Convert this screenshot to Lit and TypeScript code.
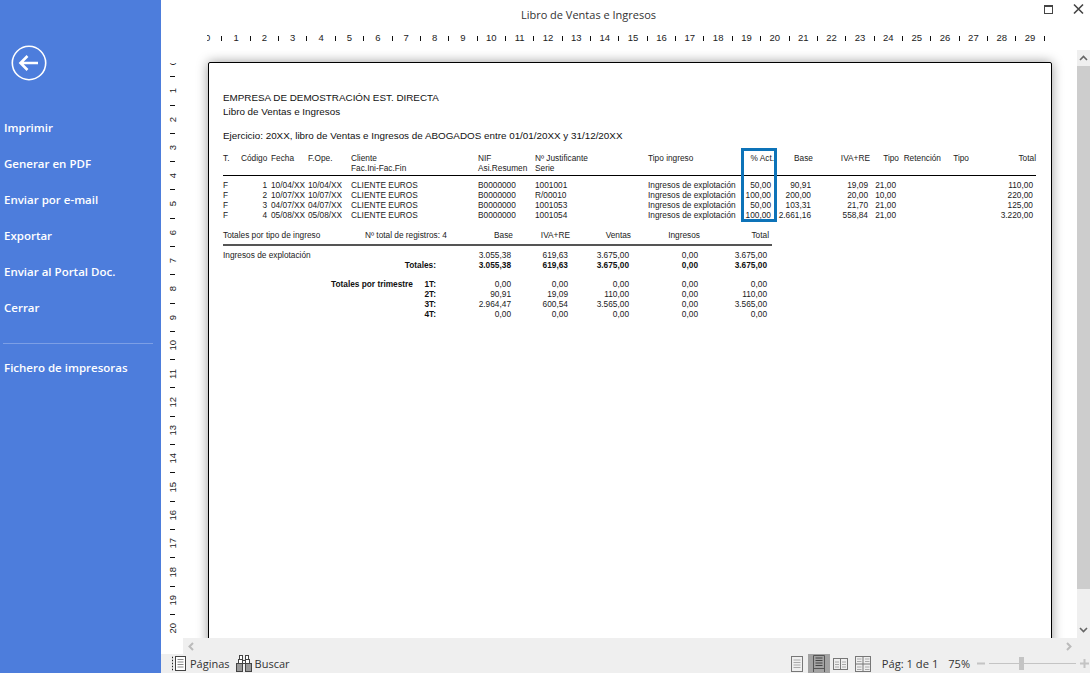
import { LitElement, html, css } from "lit";
import { customElement } from "lit/decorators.js";

const MENU = ["Imprimir", "Generar en PDF", "Enviar por e-mail", "Exportar", "Enviar al Portal Doc.", "Cerrar"];
const H_NUMS = Array.from({ length: 30 }, (_, i) => i);
const V_NUMS = Array.from({ length: 21 }, (_, i) => i);

const ROWS = [
  ["F", "1", "10/04/XX", "10/04/XX", "CLIENTE EUROS", "B0000000", "1001001", "Ingresos de explotación", "50,00", "90,91", "19,09", "21,00", "", "", "110,00"],
  ["F", "2", "10/07/XX", "10/07/XX", "CLIENTE EUROS", "B0000000", "R/00010", "Ingresos de explotación", "100,00", "200,00", "20,00", "10,00", "", "", "220,00"],
  ["F", "3", "04/07/XX", "04/07/XX", "CLIENTE EUROS", "B0000000", "1001053", "Ingresos de explotación", "50,00", "103,31", "21,70", "21,00", "", "", "125,00"],
  ["F", "4", "05/08/XX", "05/08/XX", "CLIENTE EUROS", "B0000000", "1001054", "Ingresos de explotación", "100,00", "2.661,16", "558,84", "21,00", "", "", "3.220,00"],
];

const CELL_CLASS: Record<number, string> = { 1: "r", 8: "r v", 9: "r v2", 10: "r v2", 11: "r v", 14: "r v" };

const TRIM = [
  ["1T:", "0,00", "0,00", "0,00", "0,00", "0,00"],
  ["2T:", "90,91", "19,09", "110,00", "0,00", "110,00"],
  ["3T:", "2.964,47", "600,54", "3.565,00", "0,00", "3.565,00"],
  ["4T:", "0,00", "0,00", "0,00", "0,00", "0,00"],
];

@customElement("app-root")
export class AppRoot extends LitElement {
  static styles = css`
    :host { display: block; width: 1090px; height: 673px; overflow: hidden; background: #fff; font-family: "Open Sans", "Noto Sans", sans-serif; }
    .app { display: flex; width: 1090px; height: 673px; }
    .side { width: 161px; flex: none; background: #4d7ddc; color: #fff; display: flex; flex-direction: column; box-sizing: border-box; padding-top: 45px; }
    .back { width: 36px; height: 36px; margin-left: 11px; margin-bottom: 29px; display: block; }
    .item { height: 36px; line-height: 36px; padding-left: 4px; font-size: 11.5px; font-weight: 600; white-space: nowrap; }
    .sep { height: 1px; background: #7c9fe6; margin: 17px 8px 6px 3px; }
    .main { flex: 1; min-width: 0; display: flex; flex-direction: column; }
    .title { height: 28px; display: flex; align-items: center; justify-content: center; position: relative; font-size: 11px; color: #333; padding-right: 74px; }
    .win { position: absolute; top: 3px; right: 2px; display: flex; align-items: center; }
    .win svg { display: block; }
    .hruler { height: 22px; flex: none; margin-left: 46px; margin-right: 40px; overflow: hidden; display: flex; align-items: flex-start; font: 9.5px/20px "Liberation Sans", sans-serif; color: #222; }
    .hcell { width: 28.36px; flex: none; position: relative; text-align: center; height: 20px; }
    .hcell:first-child { margin-left: -13.5px; }
    .hcell::after { content: ""; position: absolute; right: -0.5px; top: 8px; width: 1px; height: 5px; background: #111; }
    .mid { flex: 1; min-height: 0; display: flex; }
    .vruler { width: 24px; flex: none; margin-top: 12.5px; overflow: hidden; font: 9.5px/10px "Liberation Sans", sans-serif; color: #222; position: relative; }
    .vcell { height: 28.3px; position: relative; display: flex; align-items: center; justify-content: center; }
    .vcell:first-child { margin-top: -14.1px; }
    .vcell span { writing-mode: vertical-rl; transform: rotate(180deg); display: block; }
    .vcell::after { content: ""; position: absolute; left: 9px; bottom: -0.5px; width: 5px; height: 1px; background: #111; }
    .canvas { flex: 1; min-width: 0; overflow: hidden; padding: 12px 0 0 23px; }
    .page { width: 844px; height: 620px; box-sizing: border-box; border: 1px solid #000; border-radius: 2px 2px 0 0; background: #fff; box-shadow: 0 0 12px rgba(0,0,0,.4); padding: 28px 0 0 14px; font: 8.3px/10px "Liberation Sans", sans-serif; color: #222; }
    .h1 { font-size: 9.85px; line-height: 14px; color: #111; white-space: nowrap; }
    .h1.gap { margin-top: 10px; margin-bottom: 10px; }
    .grid { display: grid; grid-template-columns: 18px 26px 4px 37px 43px 127px 57px 113px 94px 32px 39px 57px 29px 42px 28px 67px; width: 813px; white-space: nowrap; position: relative; }
    .r { text-align: right; }
    .hd { height: 22px; border-bottom: 1px solid #000; margin-bottom: 4px; }
    .v { padding-right: 3px; }
    .v2 { padding-right: 2px; }
    .box { position: absolute; left: 518px; top: -5px; width: 36px; height: 74px; box-sizing: border-box; border: 3px solid #0d73b8; pointer-events: none; }
    .wrap { position: relative; width: 813px; }
    .t2 { display: grid; grid-template-columns: 213px 77px 57px 61px 69px 69px; width: 549px; white-space: nowrap; }
    .lab { display: flex; }
    .t2h { margin-top: 10px; height: 14px; border-bottom: 2px solid #555; margin-bottom: 4px; }
    .b { font-weight: 700; color: #111; }
    .n { padding-right: 2px; text-align: right; }
    .nh { text-align: right; }
    .first { width: 142px; flex: none; }
    .tt { flex: 1; text-align: right; }
    .tri { margin-left: 108px; font-weight: 700; color: #111; }
    .gapTop { margin-top: 9px; }
    .vs { width: 13px; flex: none; background: #efefef; display: flex; flex-direction: column; align-items: stretch; }
    .arrow { height: 16px; display: flex; align-items: center; justify-content: center; }
    .thumb { height: 523px; background: #cdcdcd; }
    .rest { flex: 1; }
    .hsrow { height: 16px; flex: none; display: flex; }
    .hsgap { width: 22px; flex: none; background: #fff; }
    .hs { flex: 1; background: #efefef; display: flex; justify-content: space-between; align-items: center; padding: 0 18px 0 5px; }
    .status { height: 19px; flex: none; background: #efefef; display: flex; align-items: center; font-size: 11px; color: #333; padding-left: 10px; box-sizing: border-box; }
    .status svg { display: block; flex: none; }
    .lbl { white-space: nowrap; }
    .ml4 { margin-left: 4px; }
    .ml3 { margin-left: 3px; }
    .ml6 { margin-left: 6px; }
    .pag { margin-left: 11px; font-size: 11.2px; }
    .pct { margin-left: 10px; }
    .grow { flex: 1; }
    .views { display: flex; align-items: center; }
    .vbtn { height: 19px; display: flex; align-items: center; justify-content: center; }
    .vbtn.on { background: #a3a3a3; width: 22px; margin: 0 3px 0 5px; }
    .vbtn.last { margin-left: 7px; }
    .zoom { display: flex; align-items: center; margin-left: 7px; margin-right: 1px; }
    .track { width: 87px; height: 1px; background: #c4c4c4; position: relative; margin: 0 4px; }
    .knob { position: absolute; left: 30px; top: -6px; width: 5px; height: 13px; background: #c4c4c4; }
  `;

  private hruler() {
    return html`<div class="hruler">${H_NUMS.map((n) => html`<div class="hcell">${n}</div>`)}</div>`;
  }

  private vruler() {
    return html`<div class="vruler">${V_NUMS.map((n) => html`<div class="vcell"><span>${n}</span></div>`)}</div>`;
  }

  private report() {
    return html`
      <div class="page">
        <div class="h1">EMPRESA DE DEMOSTRACIÓN EST. DIRECTA</div>
        <div class="h1">Libro de Ventas e Ingresos</div>
        <div class="h1 gap">Ejercicio: 20XX, libro de Ventas e Ingresos de ABOGADOS entre 01/01/20XX y 31/12/20XX</div>
        <div class="wrap">
          <div class="grid hd">
            <div>T.</div><div class="r">Código</div><div></div><div>Fecha</div><div>F.Ope.</div>
            <div>Cliente<br />Fac.Ini-Fac.Fin</div><div>NIF<br />Asi.Resumen</div><div>Nº Justificante<br />Serie</div>
            <div>Tipo ingreso</div><div class="r">% Act.</div><div class="r">Base</div><div class="r">IVA+RE</div>
            <div class="r">Tipo</div><div class="r">Retención</div><div class="r">Tipo</div><div class="r">Total</div>
          </div>
          ${ROWS.map((row) => html`<div class="grid">
            ${row.map((c, i) => html`${i === 2 ? html`<div></div>` : ""}<div class="${CELL_CLASS[i] ?? ""}">${c}</div>`)}
          </div>`)}
          <div class="box"></div>
        </div>
        <div class="t2 t2h">
          <div class="lab"><span class="first">Totales por tipo de ingreso</span><span>Nº total de registros: 4</span></div>
          <div class="nh">Base</div><div class="nh">IVA+RE</div><div class="nh">Ventas</div><div class="nh">Ingresos</div><div class="nh">Total</div>
        </div>
        <div class="t2">
          <div>Ingresos de explotación</div>
          <div class="n">3.055,38</div><div class="n">619,63</div><div class="n">3.675,00</div><div class="n">0,00</div><div class="n">3.675,00</div>
          <div class="b r">Totales:</div>
          <div class="n b">3.055,38</div><div class="n b">619,63</div><div class="n b">3.675,00</div><div class="n b">0,00</div><div class="n b">3.675,00</div>
        </div>
        <div class="t2 gapTop">
          ${TRIM.map((row, i) => html`
            <div class="lab">
              ${i === 0 ? html`<span class="tri">Totales por trimestre</span>` : ""}
              <span class="tt b">${row[0]}</span>
            </div>
            ${row.slice(1).map((c) => html`<div class="n">${c}</div>`)}
          `)}
        </div>
      </div>
    `;
  }

  render() {
    return html`
      <div class="app">
        <aside class="side">
          <svg class="back" viewBox="0 0 36 36" fill="none" stroke="#fff">
            <circle cx="18" cy="18" r="16.7" stroke-width="1.6" />
            <path d="M9.500 18h17.500M16.500 11l-7 7 7 7" stroke-width="2.600" />
          </svg>
          ${MENU.map((m) => html`<div class="item">${m}</div>`)}
          <div class="sep"></div>
          <div class="item">Fichero de impresoras</div>
        </aside>
        <main class="main">
          <div class="title">
            Libro de Ventas e Ingresos
            <div class="win">
              <svg width="46" height="12" viewBox="0 0 46 12" fill="none" stroke="#444">
                <rect x="2.500" y="2.500" width="8" height="8" />
                <path d="M2 3h9" stroke-width="2" />
                <path d="M32 1.500l9 9M41 1.500l-9 9" stroke-width="1.600" />
              </svg>
            </div>
          </div>
          ${this.hruler()}
          <div class="mid">
            ${this.vruler()}
            <div class="canvas">${this.report()}</div>
            <div class="vs">
              <div class="arrow"><svg width="9" height="6" viewBox="0 0 9 6" fill="none" stroke="#666" stroke-width="1.600"><path d="M1 5l3.500-3.500L8 5" /></svg></div>
              <div class="thumb"></div>
              <div class="rest"></div>
              <div class="arrow"><svg width="9" height="6" viewBox="0 0 9 6" fill="none" stroke="#666" stroke-width="1.600"><path d="M1 1l3.500 3.500L8 1" /></svg></div>
            </div>
          </div>
          <div class="hsrow">
            <div class="hsgap"></div>
            <div class="hs">
              <svg width="6" height="9" viewBox="0 0 6 9" fill="none" stroke="#bbb" stroke-width="2"><path d="M5 1L1.500 4.500 5 8" /></svg>
              <svg width="6" height="9" viewBox="0 0 6 9" fill="none" stroke="#bbb" stroke-width="2"><path d="M1 1l3.500 3.500L1 8" /></svg>
            </div>
          </div>
          <div class="status">
            <svg width="15" height="15" viewBox="0 0 15 15" fill="none" stroke="#444">
              <path d="M1 1.500h1M1 4.500h1M1 7.500h1M1 10.500h1M1 13.500h1" stroke="#222" stroke-width="1.400" />
              <rect x="4.500" y="0.500" width="10" height="14" fill="#fff" />
              <path d="M6.500 3.500h6M6.500 6h6M6.500 8.500h6M6.500 11h6" stroke="#888" />
            </svg>
            <span class="lbl ml4">Páginas</span>
            <svg class="ml6" width="16" height="17" viewBox="0 0 16 17" fill="#fff" stroke="#444">
              <rect x="3.500" y="0.500" width="3" height="4" />
              <rect x="9.500" y="0.500" width="3" height="4" />
              <rect x="2.500" y="4.500" width="4" height="4" />
              <rect x="9.500" y="4.500" width="4" height="4" />
              <rect x="6.500" y="5.500" width="3" height="3" />
              <rect x="0.500" y="8.500" width="6" height="8" fill="#999" />
              <rect x="9.500" y="8.500" width="6" height="8" fill="#999" />
            </svg>
            <span class="lbl ml3">Buscar</span>
            <div class="grow"></div>
            <div class="views">
              <div class="vbtn"><svg width="12" height="16" viewBox="0 0 12 16" fill="none" stroke="#777"><rect x="0.500" y="0.500" width="11" height="15" /><path d="M2.500 4h7M2.500 6.500h7M2.500 9h7M2.500 11.500h7" stroke="#aaa" /></svg></div>
              <div class="vbtn on"><svg width="12" height="17" viewBox="0 0 12 17" fill="none" stroke="#555"><path d="M.5 17V.5h11V17M.5 13.500h11" /><path d="M2.500 3h7M2.500 5.500h7M2.500 8h7M2.500 10.500h7" stroke="#444" /></svg></div>
              <div class="vbtn"><svg width="15" height="12" viewBox="0 0 15 12" fill="none" stroke="#777"><rect x="0.500" y="0.500" width="14" height="11" /><path d="M7.500 0v12" /><path d="M2 4h4M2 6.500h4M2 9h4M9 4h4M9 6.500h4M9 9h4" stroke="#aaa" /></svg></div>
              <div class="vbtn last"><svg width="16" height="16" viewBox="0 0 16 16" fill="none" stroke="#777"><rect x="0.500" y="0.500" width="15" height="15" /><path d="M8 0v16M0 8h16" /><path d="M2 3h4.500M2 5.500h4.500M10 3h4.500M10 5.500h4.500M2 11h4.500M2 13.500h4.500M10 11h4.500M10 13.500h4.500" stroke="#aaa" /></svg></div>
            </div>
            <span class="lbl pag">Pág: 1 de 1</span>
            <span class="lbl pct">75%</span>
            <div class="zoom">
              <svg width="8" height="3" viewBox="0 0 8 3"><rect width="8" height="2" y="0.500" fill="#c4c4c4" /></svg>
              <div class="track"><div class="knob"></div></div>
              <svg width="9" height="9" viewBox="0 0 9 9"><path d="M0 3.500h9v2H0zM3.500 0h2v9h-2z" fill="#c4c4c4" /></svg>
            </div>
          </div>
        </main>
      </div>
    `;
  }
}
